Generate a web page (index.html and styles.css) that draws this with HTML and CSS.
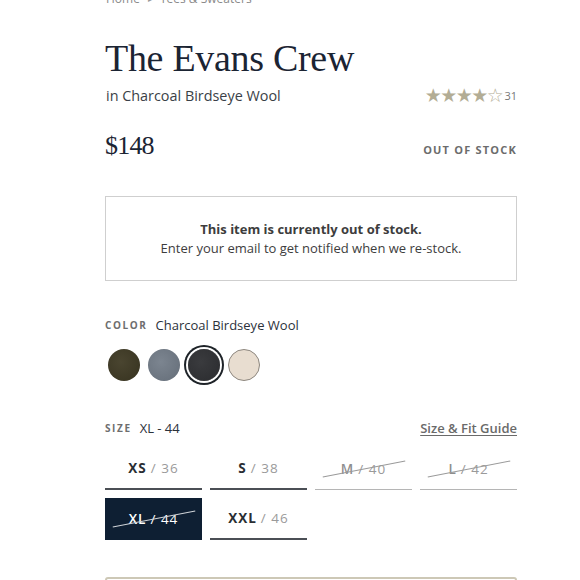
FILE: index.html
```html
<!DOCTYPE html>
<html>
<head>
<meta charset="utf-8">
<link rel="stylesheet" href="styles.css">
</head>
<body>
<main class="product">
  <nav class="crumbs"><span>Home</span><span class="sep">&#9656;</span><span>Tees &amp; Sweaters</span></nav>
  <h1 class="title">The Evans Crew</h1>
  <div class="sub-row">
    <p class="subtitle">in Charcoal Birdseye Wool</p>
    <div class="rating">
      <span class="stars">&#9733;&#9733;&#9733;&#9733;<span class="empty">&#9734;</span></span>
      <span class="count">31</span>
    </div>
  </div>
  <div class="price-row">
    <span class="price">$148</span>
    <span class="stock">OUT OF STOCK</span>
  </div>
  <div class="notice">
    <p class="notice-strong">This item is currently out of stock.</p>
    <p class="notice-text">Enter your email to get notified when we re-stock.</p>
  </div>
  <div class="label-row">
    <span class="label">COLOR</span>
    <span class="value">Charcoal Birdseye Wool</span>
  </div>
  <div class="swatches">
    <span class="swatch olive"></span>
    <span class="swatch grey"></span>
    <span class="swatch charcoal selected"></span>
    <span class="swatch cream"></span>
  </div>
  <div class="label-row size-label">
    <span class="label">SIZE</span>
    <span class="value">XL - 44</span>
    <a class="guide">Size &amp; Fit Guide</a>
  </div>
  <div class="sizes">
    <div class="size"><b>XS</b> / 36</div>
    <div class="size"><b>S</b> / 38</div>
    <div class="size soldout"><b>M</b> / 40</div>
    <div class="size soldout"><b>L</b> / 42</div>
    <div class="size soldout active"><b>XL</b> / 44</div>
    <div class="size"><b>XXL</b> / 46</div>
  </div>
  <div class="cta"></div>
</main>
</body>
</html>
```
FILE: styles.css
```css
* { box-sizing: border-box; }
html, body { margin: 0; padding: 0; background: #fff; }
body { font-family: "Open Sans", "Liberation Sans", sans-serif; color: #212a36; overflow: hidden; height: 580px; }
.product { width: 412px; margin-left: 105px; display: flex; flex-direction: column; }
.crumbs { margin-top: -9px; height: 16px; font-size: 12px; line-height: 16px; color: #8a8a8a; display: flex; gap: 8px; padding-left: 1px; }
.crumbs .sep { font-size: 8px; color: #999; }
.title { margin: 29px 0 0; font-family: "Liberation Serif", "DejaVu Serif", serif; font-weight: 400; font-size: 38px; line-height: 44px; color: #1b2433; letter-spacing: -0.3px; }
.sub-row { display: flex; justify-content: space-between; align-items: center; margin-top: 5px; height: 20px; }
.subtitle { margin: 0; font-size: 14.4px; color: #3a3f47; padding-left: 1px; }
.rating { display: flex; align-items: center; gap: 2px; }
.stars { color: #b3ad95; font-size: 19px; letter-spacing: -1.5px; line-height: 20px; font-family: "DejaVu Sans", sans-serif; }
.stars .empty { color: #b3ad95; }
.count { font-size: 11px; color: #777; }
.price-row { display: flex; justify-content: space-between; align-items: center; margin-top: 26px; height: 30px; }
.price { font-family: "Liberation Serif", serif; font-size: 26px; color: #1b2433; letter-spacing: -0.8px; }
.stock { font-size: 11px; font-weight: 700; letter-spacing: 1.2px; color: #6c6c6c; margin-top: 6px; }
.notice { margin-top: 35px; height: 85px; border: 1px solid #cfcfcf; display: flex; flex-direction: column; justify-content: center; align-items: center; }
.notice p { margin: 0; font-size: 13px; line-height: 19px; color: #3d3d3d; }
.notice-strong { font-weight: 700; }
.label-row { display: flex; align-items: center; gap: 8px; margin-top: 34px; height: 20px; }
.label { font-size: 10px; font-weight: 700; letter-spacing: 1.6px; color: #6e6e6e; }
.value { font-size: 13px; color: #2c323b; }
.swatches { display: flex; gap: 8px; margin-top: 14px; padding-left: 3px; align-items: center; }
.swatch { width: 32px; height: 32px; border-radius: 50%; display: block; }
.olive { background: radial-gradient(circle at 40% 40%, #4a4530, #36321f); }
.grey { background: radial-gradient(circle at 40% 40%, #7c8590, #646d78); }
.charcoal { background: radial-gradient(circle at 40% 40%, #3a3b3e, #2a2b2e); }
.selected { box-shadow: 0 0 0 2px #fff, 0 0 0 4px #1e2328; }
.cream { background: #e8ddd0; border: 1px solid #8d877f; }
.size-label { margin-top: 37px; }
.guide { margin-left: auto; font-size: 13px; font-weight: 600; color: #6a6a6a; text-decoration: underline; text-underline-offset: 2px; }
.sizes { display: grid; grid-template-columns: repeat(4, 1fr); gap: 8px; margin-top: 10px; }
.size { position: relative; height: 42px; display: flex; align-items: center; justify-content: center; font-size: 13.5px; letter-spacing: 1px; color: #9a9a9a; border-bottom: 2px solid #4b4f55; }
.size b { color: #2a2e33; font-weight: 700; margin-right: 4px; }
.size.soldout { border-bottom: 1px solid #b5b5b5; color: #9a9a9a; }
.size.soldout b { color: #8e8e8e; font-weight: 600; }
.size.soldout::after { content: ""; position: absolute; left: 50%; top: 50%; width: 84px; height: 1px; background: #9a9a9a; transform: translate(-50%, -50%) rotate(-11deg); }
.size.active { background: #0e1f33; color: #fff; border-bottom: 1px solid #0e1f33; }
.size.active b { color: #fff; }
.size.active::after { background: #cfd3d8; }
.cta { margin-top: 37px; height: 40px; border: 2px solid #cdc8b6; border-radius: 3px; }
```
